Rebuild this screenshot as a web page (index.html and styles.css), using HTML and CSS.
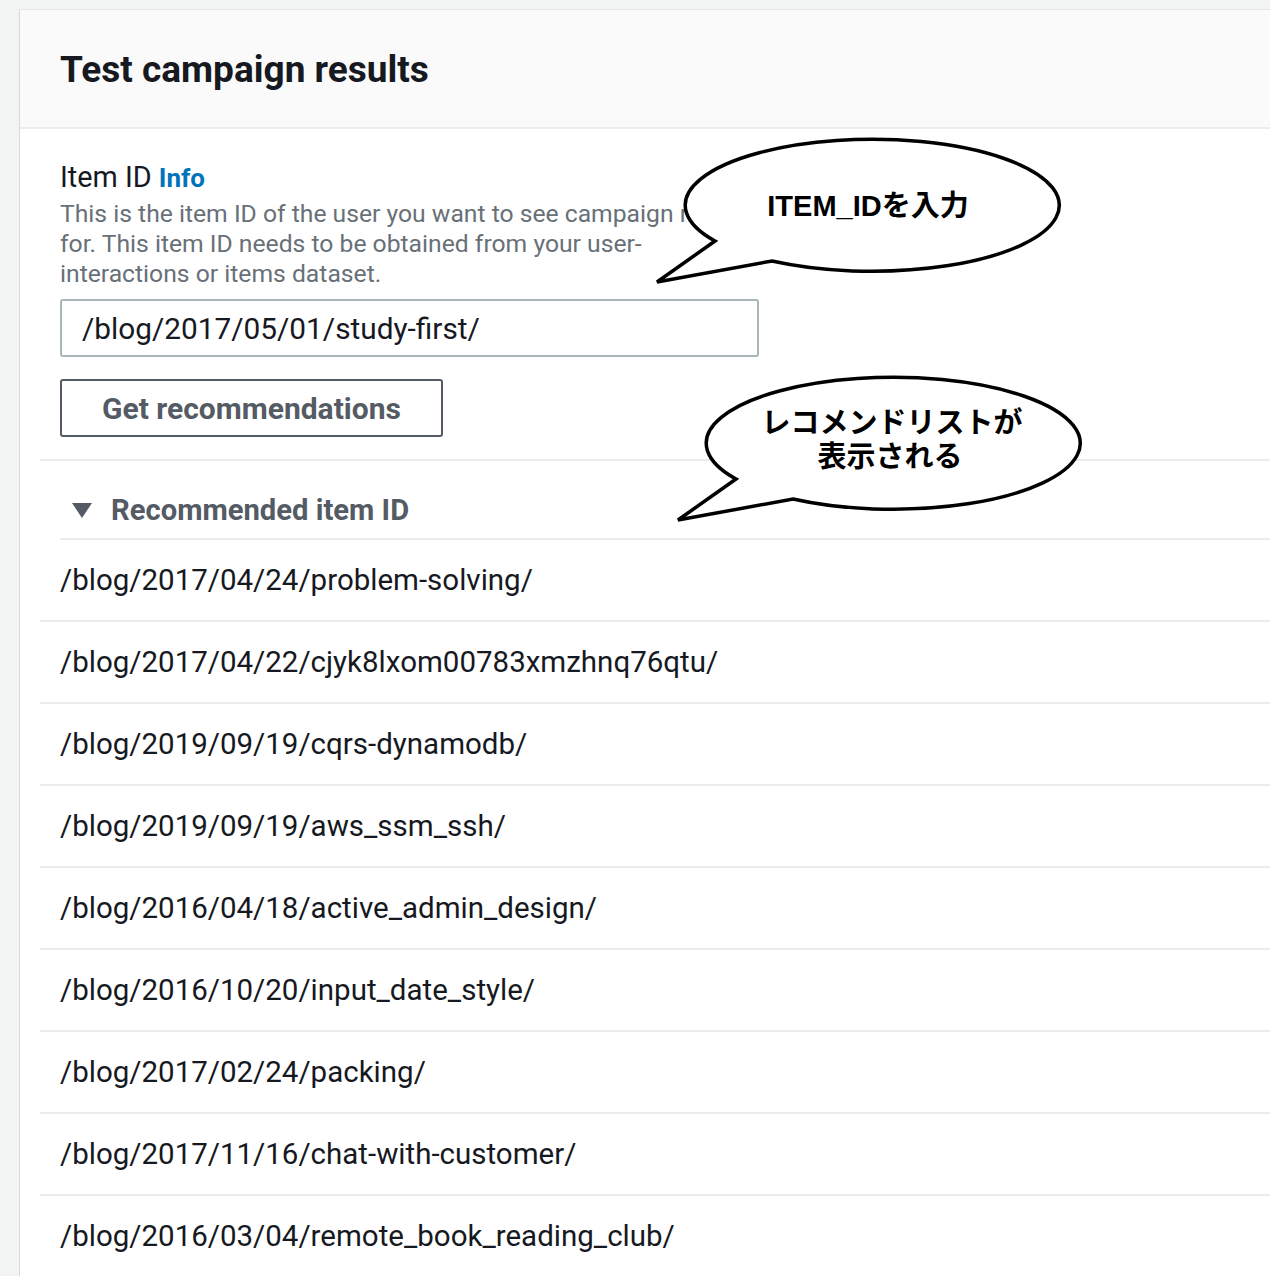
FILE: index.html
```html
<!DOCTYPE html>
<html lang="en">
<head>
<meta charset="utf-8">
<title>Test campaign results</title>
<link rel="stylesheet" href="styles.css">
</head>
<body>
<div class="card">
  <div class="card-header">
    <h2 class="title">Test campaign results</h2>
  </div>
  <div class="card-body">
    <div class="form">
      <div class="label">Item ID <span class="info">Info</span></div>
      <div class="desc">This is the item ID of the user you want to see campaign results for. This item ID needs to be obtained from your user-interactions or items dataset.</div>
      <div class="input">/blog/2017/05/01/study-first/</div>
      <div class="btn">Get recommendations</div>
    </div>
    <div class="expand">
      <div class="expand-head"><span class="caret"></span><span>Recommended item ID</span></div>
      <ul class="list">
        <li>/blog/2017/04/24/problem-solving/</li>
        <li>/blog/2017/04/22/cjyk8lxom00783xmzhnq76qtu/</li>
        <li>/blog/2019/09/19/cqrs-dynamodb/</li>
        <li>/blog/2019/09/19/aws_ssm_ssh/</li>
        <li>/blog/2016/04/18/active_admin_design/</li>
        <li>/blog/2016/10/20/input_date_style/</li>
        <li>/blog/2017/02/24/packing/</li>
        <li>/blog/2017/11/16/chat-with-customer/</li>
        <li>/blog/2016/03/04/remote_book_reading_club/</li>
      </ul>
    </div>
  </div>
</div>
<svg class="callouts" width="1270" height="1276" viewBox="0 0 1270 1276" xmlns="http://www.w3.org/2000/svg">
  <path d="M 715 241 L 657 282 L 772 261 A 187 66 0 1 0 715 241 Z" fill="#fff" stroke="#000" stroke-width="3.5" stroke-linejoin="miter"/>
  <text class="bubble-text" x="868" y="216" text-anchor="middle">ITEM_IDを入力</text>
  <path d="M 736 479 L 678 520 L 793 499 A 187 66 0 1 0 736 479 Z" fill="#fff" stroke="#000" stroke-width="3.5" stroke-linejoin="miter"/>
  <text class="bubble-text" x="892" y="433" text-anchor="middle">レコメンドリストが</text>
  <text class="bubble-text" x="890" y="467" text-anchor="middle">表示される</text>
</svg>
</body>
</html>
```
FILE: styles.css
```css
html, body {
  margin: 0;
  padding: 0;
}
body {
  background: #f2f3f3;
  height: 1276px;
  overflow: hidden;
  font-family: Roboto, "Noto Sans CJK JP", sans-serif;
  color: #16191f;
}
.card {
  margin: 9px 0 0 19px;
  background: #fff;
  border-top: 1px solid #e4e7e7;
  border-left: 1px solid #d5dbdb;
  min-height: 1300px;
}
.card-header {
  height: 119px;
  background: #fafafa;
  border-bottom: 2px solid #eaeded;
  padding: 1px 40px 0;
  box-sizing: border-box;
  display: flex;
  align-items: center;
}
.title {
  margin: 0;
  font-size: 37px;
  font-weight: 700;
  color: #16191f;
}
.card-body {
  padding-left: 20px;
}
.form {
  padding: 31px 0 22px 20px;
}
.label {
  font-size: 28.8px;
  line-height: 34px;
  color: #16191f;
}
.info {
  font-size: 26px;
  font-weight: 700;
  color: #0073bb;
}
.desc {
  margin-top: 4px;
  width: 702px;
  font-size: 24.7px;
  line-height: 30px;
  color: #687078;
}
.input {
  margin-top: 10px;
  width: 699px;
  height: 58px;
  box-sizing: border-box;
  border: 2px solid #aab7b8;
  border-radius: 3px;
  padding-left: 20px;
  display: flex;
  align-items: center;
  font-size: 29.8px;
  color: #16191f;
}
.btn {
  margin-top: 22px;
  display: inline-flex;
  align-items: center;
  height: 58px;
  box-sizing: border-box;
  padding: 0 40px;
  border: 2px solid #545b64;
  border-radius: 3px;
  font-size: 30px;
  font-weight: 700;
  color: #545b64;
}
.expand {
  border-top: 2px solid #eaeded;
}
.expand-head {
  margin-left: 20px;
  height: 79px;
  box-sizing: border-box;
  border-bottom: 2px solid #eaeded;
  padding-left: 12px;
  padding-top: 21px;
  display: flex;
  align-items: center;
  gap: 19px;
  font-size: 29.2px;
  font-weight: 700;
  color: #545b64;
}
.caret {
  width: 0;
  height: 0;
  border-left: 10px solid transparent;
  border-right: 10px solid transparent;
  border-top: 15px solid #545b64;
}
.list {
  list-style: none;
  margin: 0;
  padding: 0;
}
.list li {
  height: 82px;
  box-sizing: border-box;
  border-bottom: 2px solid #eaeded;
  padding-left: 20px;
  display: flex;
  align-items: center;
  font-size: 29.5px;
  color: #16191f;
}
.callouts {
  position: absolute;
  left: 0;
  top: 0;
  pointer-events: none;
}
.bubble-text {
  font-family: "Liberation Sans", "Noto Sans CJK JP", sans-serif;
  font-size: 29px;
  font-weight: 700;
  fill: #000;
}
```
